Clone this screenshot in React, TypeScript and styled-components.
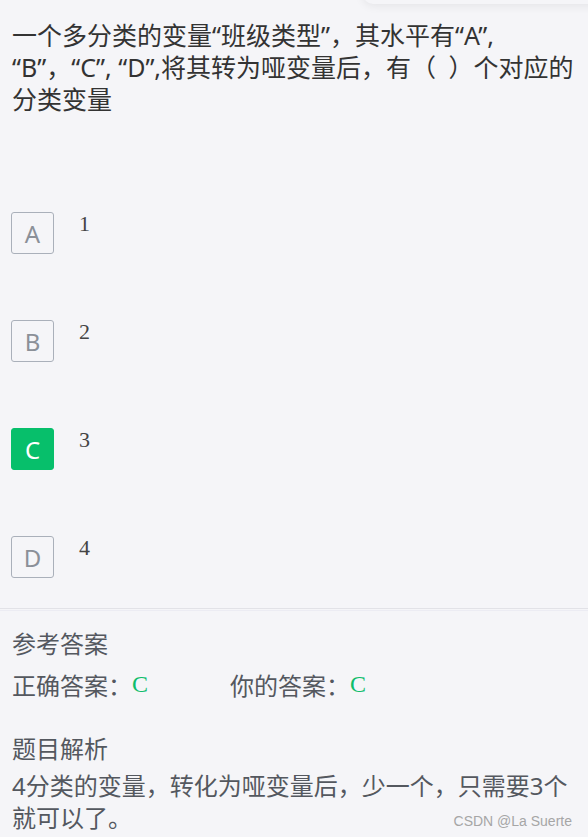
import React from "react";
import styled, { createGlobalStyle } from "styled-components";

const GlobalStyle = createGlobalStyle`
  html, body {
    margin: 0;
    padding: 0;
    background: #f5f5f8;
  }
  body {
    font-family: "Noto Sans", "Noto Sans CJK SC", sans-serif;
  }
`;

const Page = styled.div`
  position: relative;
  width: 588px;
  height: 837px;
  overflow: hidden;
  background: #f5f5f8;
`;

// faint edge of a floating panel peeking in from the top
const TopShade = styled.div`
  position: absolute;
  top: -40px;
  right: -30px;
  width: 255px;
  height: 44px;
  border-radius: 10px;
  background: #f5f5f8;
  box-shadow: 0 2px 10px rgba(0, 0, 0, 0.07);
`;

const Question = styled.div`
  padding: 19px 8px 0 12px;
  font-size: 25px;
  line-height: 32px;
  color: #333;
`;

const OptionList = styled.div`
  display: flex;
  flex-direction: column;
  gap: 66px;
  margin-top: 97px;
  padding-left: 11px;
`;

const OptionRow = styled.div`
  display: flex;
  align-items: flex-start;
  gap: 25px;
`;

const OptionKey = styled.div<{ $active?: boolean }>`
  box-sizing: border-box;
  width: 43px;
  height: 42px;
  display: flex;
  align-items: center;
  justify-content: center;
  border-radius: 3px;
  border: 1px solid ${(p) => (p.$active ? "#07bf6b" : "#aab0ba")};
  background: ${(p) => (p.$active ? "#07bf6b" : "transparent")};
  color: ${(p) => (p.$active ? "#fff" : "#8b9098")};
  font-size: 24px;
`;

const OptionText = styled.div`
  font-family: "Liberation Serif", serif;
  font-size: 22px;
  line-height: 24px;
  color: #444;
`;

const Divider = styled.div`
  margin-top: 30px;
  height: 1px;
  border-top: 1px solid #e2e2e7;
  border-bottom: 1px solid #ececf3;
`;

const Section = styled.div`
  padding: 0 12px;
  color: #54585f;
  font-size: 24px;
`;

const SectionTitle = styled.div<{ $gap?: number }>`
  margin-top: ${(p) => p.$gap ?? 0}px;
  line-height: 40px;
`;

const AnswerRow = styled.div`
  display: flex;
  line-height: 40px;
`;

const AnswerItem = styled.div`
  width: 218px;
`;

const AnswerValue = styled.span`
  font-family: "Liberation Serif", serif;
  font-size: 24px;
  color: #0fbd6c;
  vertical-align: 3px;
`;

const Analysis = styled.div`
  line-height: 32px;
  margin-top: 1px;
`;

const Watermark = styled.div`
  position: absolute;
  right: 16px;
  bottom: 8px;
  font-family: "Liberation Sans", sans-serif;
  font-size: 14px;
  color: #a6a6a6;
`;

const options = [
  { key: "A", text: "1" },
  { key: "B", text: "2" },
  { key: "C", text: "3", active: true },
  { key: "D", text: "4" },
];

const questionText =
  "一个多分类的变量“班级类型”，其水平有“A”, “B”，“C”, “D”,将其转为哑变量后，有（\u2002）个对应的分类变量";

export default function App() {
  return (
    <Page>
      <GlobalStyle />
      <TopShade />
      <Question>{questionText}</Question>
      <OptionList>
        {options.map((o) => (
          <OptionRow key={o.key}>
            <OptionKey $active={o.active}>{o.key}</OptionKey>
            <OptionText>{o.text}</OptionText>
          </OptionRow>
        ))}
      </OptionList>
      <Divider />
      <Section>
        <SectionTitle $gap={13}>参考答案</SectionTitle>
        <AnswerRow>
          <AnswerItem>
            正确答案：<AnswerValue>C</AnswerValue>
          </AnswerItem>
          <AnswerItem>
            你的答案：<AnswerValue>C</AnswerValue>
          </AnswerItem>
        </AnswerRow>
        <SectionTitle $gap={23}>题目解析</SectionTitle>
        <Analysis>4分类的变量，转化为哑变量后，少一个，只需要3个就可以了。</Analysis>
      </Section>
      <Watermark>CSDN @La Suerte</Watermark>
    </Page>
  );
}
